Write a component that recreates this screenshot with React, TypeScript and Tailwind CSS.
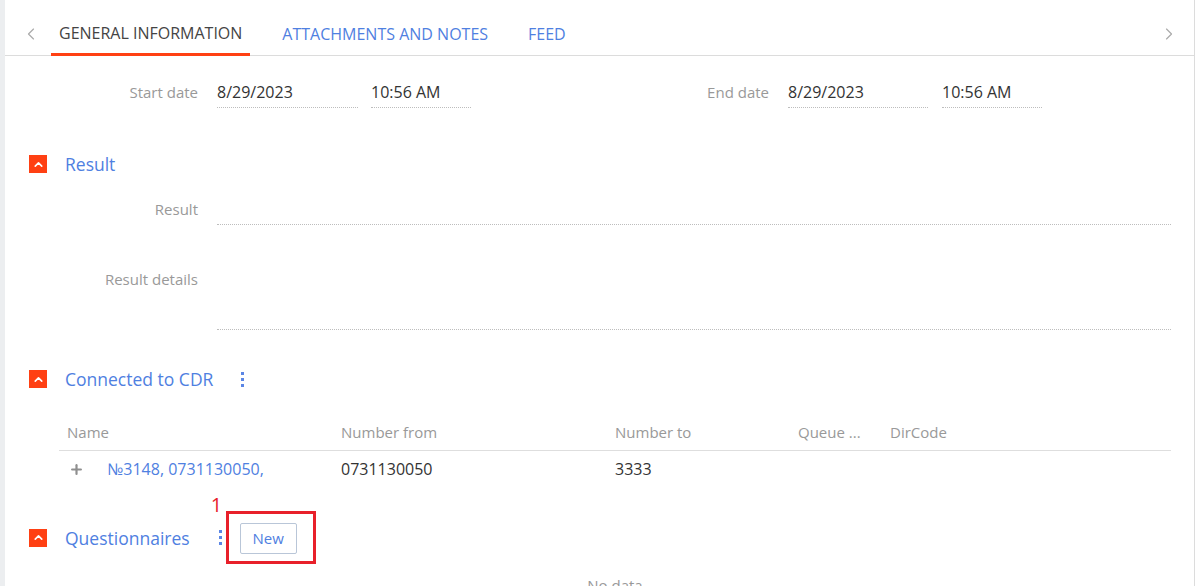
import { ChevronLeft, ChevronRight, ChevronUp, Plus } from 'lucide-react';

const font = { fontFamily: '"Open Sans", "Liberation Sans", sans-serif' };

// vertical "kebab" dots used next to detail captions
const Dots = () => (
  <span className="flex flex-col gap-[3px]">
    <span className="w-[3px] h-[3px] bg-[#5b86e5]" />
    <span className="w-[3px] h-[3px] bg-[#5b86e5]" />
    <span className="w-[3px] h-[3px] bg-[#5b86e5]" />
  </span>
);

const Toggle = () => (
  <span className="w-[18px] h-[18px] bg-[#ff4013] flex items-center justify-center">
    <ChevronUp className="w-[13px] h-[13px] text-white" strokeWidth={3} />
  </span>
);

const SectionHeader = ({ title, children }: { title: string; children?: React.ReactNode }) => (
  <div className="flex items-center pl-[24px] min-h-[24px]">
    <Toggle />
    <span className="ml-[18px] text-[17.5px] leading-[24px] text-[#4f80e1]">{title}</span>
    {children}
  </div>
);

const Field = ({ value, width }: { value?: string; width: string }) => (
  <div className={`${width} h-[32px] flex items-center border-b border-dotted border-[#bdbdbd] text-[16px] text-[#333]`}>
    {value}
  </div>
);

const Label = ({ text, className = '' }: { text: string; className?: string }) => (
  <span className={`w-[212px] pr-[19px] text-right text-[15px] leading-[20px] text-[#999] ${className}`}>{text}</span>
);

const tabs = ['GENERAL INFORMATION', 'ATTACHMENTS AND NOTES', 'FEED'];

const columns = [
  { title: 'Name', w: 'w-[274px]' },
  { title: 'Number from', w: 'w-[274px]' },
  { title: 'Number to', w: 'w-[183px]' },
  { title: 'Queue ...', w: 'w-[92px]' },
  { title: 'DirCode', w: 'flex-1' },
];

export default function App() {
  return (
    <div className="w-[1197px] h-[586px] overflow-hidden bg-white flex" style={font}>
      <div className="w-[5px] bg-[#eceef0]" />
      <div className="w-[1190px] border-r border-[#dcdcdc]">
        {/* tab strip */}
        <div className="h-[56px] border-b border-[#dcdcdc] flex items-stretch">
          <div className="w-[46px] flex items-center justify-center pt-[12px] pl-[6px]">
            <ChevronLeft className="w-[20px] h-[20px] text-[#aaa]" strokeWidth={1.4} />
          </div>
          <div className="flex gap-[24px]">
            {tabs.map((t, i) => (
              <div
                key={t}
                className={`px-[8px] pt-[12px] flex items-center text-[16px] ${
                  i === 0 ? 'text-[#444] border-b-[3px] border-[#ff4013] -mb-px' : 'text-[#4f80e1]'
                }`}
              >
                {t}
              </div>
            ))}
          </div>
          <div className="flex-1" />
          <div className="w-[46px] flex items-center justify-center pt-[12px] pr-[4px]">
            <ChevronRight className="w-[20px] h-[20px] text-[#aaa]" strokeWidth={1.4} />
          </div>
        </div>

        {/* dates */}
        <div className="flex mt-[20px]">
          <div className="w-[571px] flex items-center">
            <Label text="Start date" />
            <Field value="8/29/2023" width="w-[141px]" />
            <div className="w-[13px]" />
            <Field value="10:56 AM" width="w-[100px]" />
          </div>
          <div className="flex items-center">
            <Label text="End date" />
            <Field value="8/29/2023" width="w-[140px]" />
            <div className="w-[14px]" />
            <Field value="10:56 AM" width="w-[100px]" />
          </div>
        </div>

        {/* result */}
        <div className="mt-[44px]">
          <SectionHeader title="Result" />
        </div>
        <div className="flex items-center mt-[17px] pr-[23px]">
          <Label text="Result" />
          <Field width="flex-1" />
        </div>
        <div className="flex mt-[38px] pr-[23px]">
          <Label text="Result details" className="pt-[6px]" />
          <div className="flex-1 h-[67px] border-b border-dotted border-[#bdbdbd]" />
        </div>

        {/* connected CDR grid */}
        <div className="mt-[37px]">
          <SectionHeader title="Connected to CDR">
            <span className="ml-[28px]">
              <Dots />
            </span>
          </SectionHeader>
        </div>
        <div className="ml-[54px] mr-[23px] mt-[23px]">
          <div className="h-[37px] flex items-center border-b border-[#dedede] text-[15px] text-[#999]">
            {columns.map((c) => (
              <span key={c.title} className={`${c.w} px-[8px]`}>
                {c.title}
              </span>
            ))}
          </div>
          <div className="h-[36px] flex items-center text-[16px] text-[#333]">
            <span className="w-[274px] px-[8px] flex items-center">
              <Plus className="w-[15px] h-[15px] ml-[2px] text-[#8f8f8f]" strokeWidth={3.5} />
              <span className="ml-[23px] text-[#4f80e1]">№3148, 0731130050,</span>
            </span>
            <span className="w-[274px] px-[8px]">0731130050</span>
            <span className="w-[183px] px-[8px]">3333</span>
          </div>
        </div>

        {/* questionnaires */}
        <div className="mt-[24px]">
          <SectionHeader title="Questionnaires">
            <span className="ml-[29px]">
              <Dots />
            </span>
            <div className="relative ml-[4px] border-[3px] border-[#e8202a] pl-[11px] pr-[16px] pt-[9px] pb-[7px]">
              <span className="absolute -left-[18px] -top-[19px] text-[20px] leading-none text-[#e8202a]">1</span>
              <button className="w-[57px] h-[31px] border border-[#b9c6d8] rounded-[2px] text-[15px] text-[#4f80e1]">
                New
              </button>
            </div>
          </SectionHeader>
        </div>
        <div className="ml-[54px] mr-[23px] mt-[11px] text-center text-[15px] leading-[20px] text-[#999]">No data</div>
      </div>
    </div>
  );
}
